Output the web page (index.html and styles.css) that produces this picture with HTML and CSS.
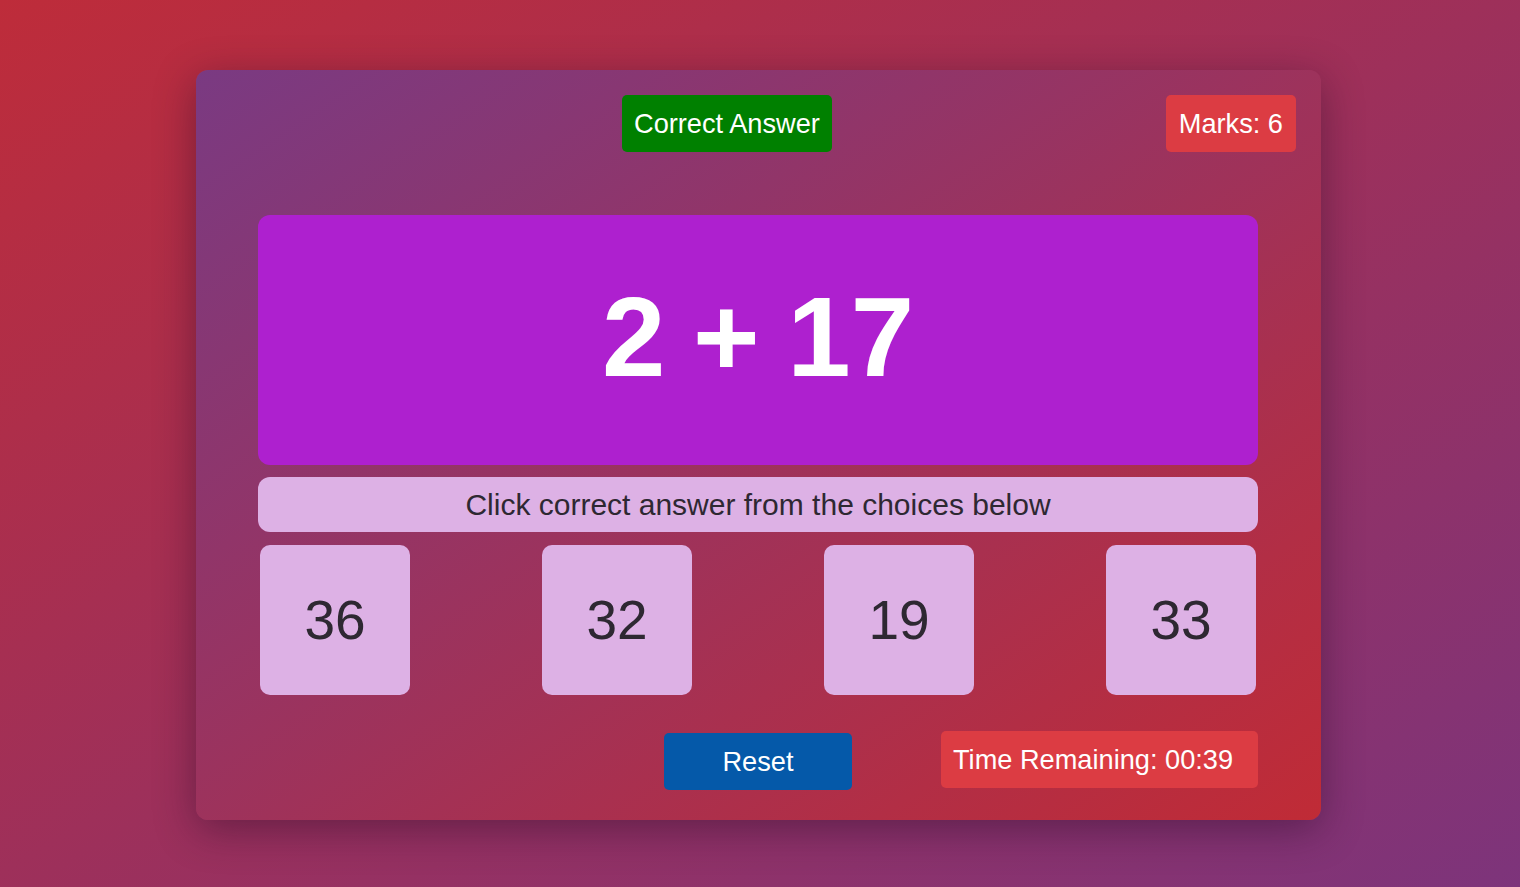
FILE: index.html
```html
<!DOCTYPE html>
<html lang="en">
<head>
<meta charset="utf-8">
<title>Math Quiz</title>
<link rel="stylesheet" href="styles.css">
</head>
<body>
<div class="page">
  <div class="card">
    <div class="header">
      <div class="badge badge-correct">Correct Answer</div>
      <div class="badge badge-marks">Marks: 6</div>
    </div>
    <div class="stage">
      <div class="question">2 + 17</div>
      <div class="instruction">Click correct answer from the choices below</div>
      <div class="choices">
        <div class="choice">36</div>
        <div class="choice">32</div>
        <div class="choice">19</div>
        <div class="choice">33</div>
      </div>
      <div class="footer">
        <div class="footer-spacer"></div>
        <button class="reset">Reset</button>
        <div class="timer">Time Remaining: 00:39</div>
      </div>
    </div>
  </div>
</div>
</body>
</html>
```
FILE: styles.css
```css
html, body {
  margin: 0;
  padding: 0;
  height: 100%;
}
body {
  font-family: "Liberation Sans", Arial, sans-serif;
  background: linear-gradient(to bottom right, #be2c3a, #7d347b);
  overflow: hidden;
}
.page {
  display: flex;
  justify-content: center;
  padding-top: 70px;
  padding-right: 3px;
}
.card {
  width: 1125px;
  height: 750px;
  box-sizing: border-box;
  padding: 25px;
  border-radius: 12px;
  background: linear-gradient(to bottom right, #7a3a82, #c02b36);
  box-shadow: 0 10px 40px rgba(40, 10, 40, 0.45);
  display: flex;
  flex-direction: column;
}
.header {
  display: flex;
  align-items: flex-start;
}
.badge {
  color: #fff;
  font-size: 27.2px;
  line-height: 31px;
  padding: 13px 12px;
  border-radius: 5px;
  white-space: nowrap;
}
.badge-correct {
  background: #008000;
  margin-left: 401px;
}
.badge-marks {
  background: #dc3c43;
  margin-left: auto;
  padding: 13px 13px;
}
.stage {
  margin: 63px 38px 0 37px;
  display: flex;
  flex-direction: column;
}
.question {
  height: 250px;
  box-sizing: border-box;
  padding-bottom: 8px;
  border-radius: 12px;
  background: #ae20cf;
  color: #fff;
  font-weight: bold;
  font-size: 114px;
  display: flex;
  align-items: center;
  justify-content: center;
  word-spacing: -4px;
}
.instruction {
  margin-top: 12px;
  height: 55px;
  border-radius: 12px;
  background: #ddb1e5;
  color: #2e2832;
  font-size: 30px;
  display: flex;
  align-items: center;
  justify-content: center;
}
.choices {
  margin-top: 13px;
  display: flex;
  justify-content: space-between;
  padding: 0 2px;
}
.choice {
  width: 150px;
  height: 150px;
  border-radius: 10px;
  background: #ddb1e5;
  color: #2e2832;
  font-size: 55px;
  display: flex;
  align-items: center;
  justify-content: center;
}
.footer {
  margin-top: 36px;
  display: grid;
  grid-template-columns: 1fr auto 1fr;
  align-items: start;
}
.reset {
  width: 188px;
  height: 57px;
  margin-top: 2px;
  border: none;
  border-radius: 5px;
  background: #0559a9;
  color: #fff;
  font-family: "Liberation Sans", Arial, sans-serif;
  font-size: 27.2px;
  padding: 0;
}
.timer {
  justify-self: end;
  width: 317px;
  box-sizing: border-box;
  background: #dc3c43;
  color: #fff;
  font-size: 27.2px;
  line-height: 31px;
  padding: 13px 12px;
  border-radius: 5px;
  white-space: nowrap;
}
```
